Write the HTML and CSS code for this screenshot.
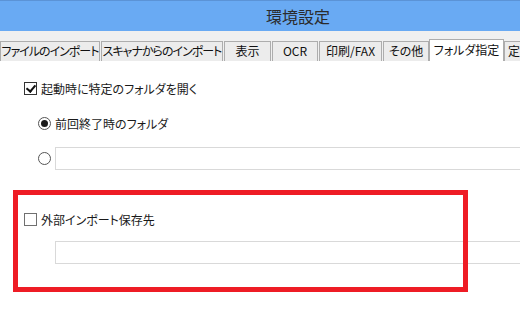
FILE: index.html
```html
<!DOCTYPE html>
<html lang="ja">
<head>
  <meta charset="UTF-8">
  <title>環境設定</title>
  <link rel="stylesheet" href="styles.css">
</head>
<body>
  <div class="window">
    <div class="titlebar">環境設定</div>

    <div class="tabstrip">
      <div class="tab t1">ファイルのインポート</div>
      <div class="tab t2">スキャナからのインポート</div>
      <div class="tab t3">表示</div>
      <div class="tab t4">OCR</div>
      <div class="tab t5">印刷/FAX</div>
      <div class="tab t6">その他</div>
      <div class="tab t7 active">フォルダ指定</div>
      <div class="tab t8">定</div>
    </div>

    <div class="panel">
      <label class="row first">
        <span class="check checked"></span>
        <span>起動時に特定のフォルダを開く</span>
      </label>

      <div class="sub">
        <label class="row radio-row">
          <span class="radio on"></span>
          <span>前回終了時のフォルダ</span>
        </label>
        <div class="row path-row">
          <span class="radio"></span>
          <div class="textbox"></div>
        </div>
      </div>

      <label class="row import">
        <span class="check"></span>
        <span>外部インポート保存先</span>
      </label>
      <div class="sub">
        <div class="textbox"></div>
      </div>

      <div class="highlight"></div>
    </div>
  </div>
</body>
</html>
```

FILE: styles.css
```css
body {
  margin: 0;
  padding: 0;
  background-color: #ffffff;
  font-family: "Noto Sans CJK JP", "Noto Sans", sans-serif;
  font-feature-settings: "palt";
  color: #1a1a1a;
  overflow: hidden;
}

.window {
  width: 520px;
  height: 320px;
  overflow: hidden;
}

.titlebar {
  height: 30px;
  border-top: 1px solid #5b93d6;
  background-color: #69aaf3;
  color: #2b2b2b;
  font-size: 16px;
  line-height: 30px;
  text-align: center;
  padding-left: 76px;
}

.tabstrip {
  display: flex;
  align-items: flex-end;
  height: 30px;
  background-color: #f0f0f0;
  white-space: nowrap;
}

.tab {
  flex-shrink: 0;
  box-sizing: border-box;
  height: 20px;
  line-height: 18px;
  font-size: 12px;
  text-align: center;
  background-color: #ececec;
  border: 1px solid #adadad;
  border-bottom: none;
  margin-right: 1px;
  color: #111;
}

.tab.t1 { width: 100px; letter-spacing: -1px; }
.tab.t2 { width: 122px; letter-spacing: -1px; }
.tab.t3 { width: 47px; }
.tab.t4 { width: 46px; }
.tab.t5 { width: 63px; }
.tab.t6 { width: 46px; margin-right: 0; }
.tab.t7 { width: 75px; }
.tab.t8 { width: 30px; text-align: left; padding-left: 3px; }

.tab.active {
  height: 22px;
  line-height: 20px;
  background-color: #ffffff;
  margin-right: 0;
}

.panel {
  position: relative;
  padding: 19px 0 0 24px;
  font-size: 12px;
}

.row {
  display: flex;
  align-items: center;
  gap: 4px;
  height: 16px;
}

.sub {
  padding-left: 14px;
}

.radio-row {
  margin-top: 19px;
}

.path-row {
  margin-top: 16px;
  height: 23px;
  gap: 4px;
}

.import {
  margin-top: 41px;
}

.import + .sub {
  padding-left: 31px;
  margin-top: 14px;
}

.check {
  flex-shrink: 0;
  box-sizing: border-box;
  width: 13px;
  height: 13px;
  border: 1px solid #707070;
  background-color: #fff;
  position: relative;
}

.check.checked {
  border-color: #333;
}

.check.checked::after {
  content: "";
  position: absolute;
  left: 3px;
  top: 0px;
  width: 4px;
  height: 7px;
  border-right: 2px solid #111;
  border-bottom: 2px solid #111;
  transform: rotate(40deg);
}

.radio {
  flex-shrink: 0;
  box-sizing: border-box;
  width: 13px;
  height: 13px;
  border: 1px solid #555;
  border-radius: 50%;
  background-color: #fff;
  position: relative;
}

.radio.on::after {
  content: "";
  position: absolute;
  left: 2px;
  top: 2px;
  width: 7px;
  height: 7px;
  border-radius: 50%;
  background-color: #1a1a1a;
}

.textbox {
  flex-shrink: 0;
  box-sizing: border-box;
  width: 500px;
  height: 23px;
  border: 1px solid #d9d9d9;
  background-color: #fff;
}

.highlight {
  position: absolute;
  left: 13px;
  top: 129px;
  width: 455px;
  height: 102px;
  box-sizing: border-box;
  border: 5px solid #ee1c25;
}
```
